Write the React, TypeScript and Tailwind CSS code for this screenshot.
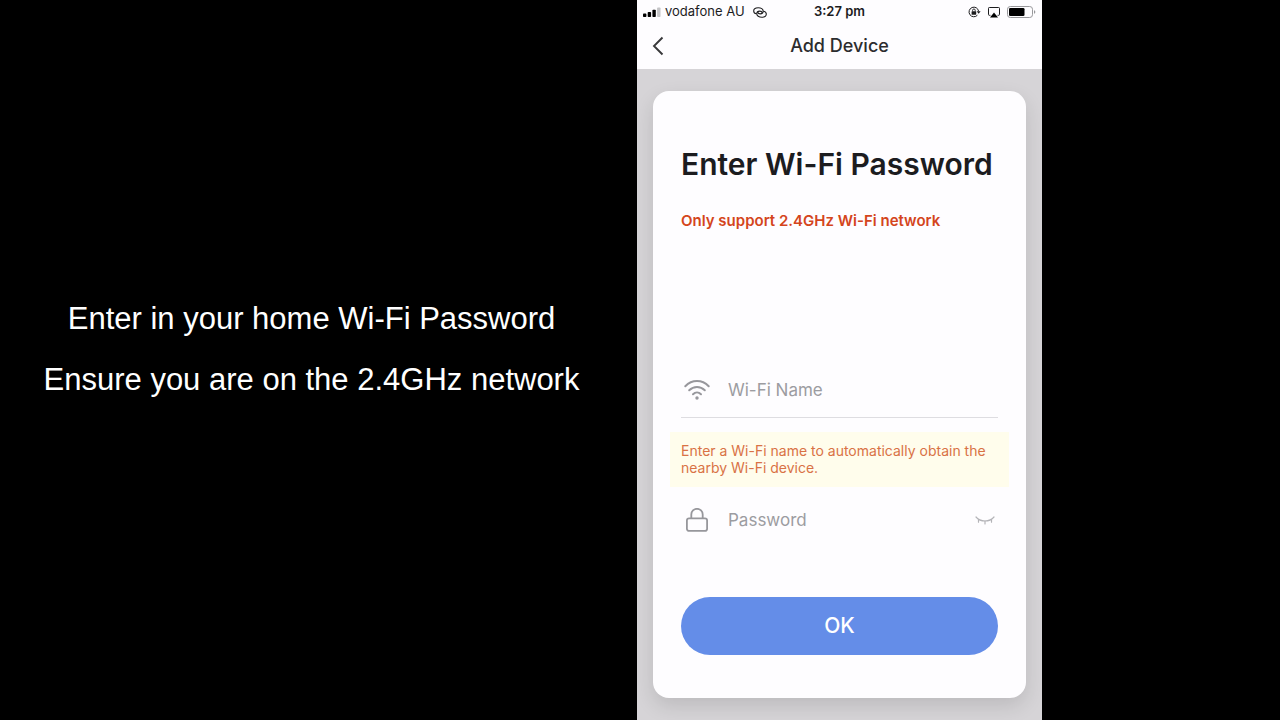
import type { ReactNode } from "react";

const CAPTIONS = [
  "Enter in your home Wi-Fi Password",
  "Ensure you are on the 2.4GHz network",
];

function SignalIcon() {
  return (
    <svg width="18" height="11" viewBox="0 0 18 11" aria-hidden="true">
      <rect x="0" y="6.6" width="3.4" height="3.4" rx="0.8" fill="#000" />
      <rect x="4.7" y="5" width="3.4" height="5" rx="0.8" fill="#000" />
      <rect x="9.4" y="2.8" width="3.4" height="7.2" rx="0.8" fill="#000" />
      <rect x="14.1" y="0.4" width="3.4" height="9.6" rx="0.8" fill="#c4c4c6" />
    </svg>
  );
}

/** Two interlocked loops, shown while a personal hotspot is shared. */
function HotspotIcon() {
  return (
    <svg
      width="14"
      height="11"
      viewBox="0 0 14 11"
      fill="none"
      stroke="#1c1c1e"
      strokeWidth="1.1"
      strokeLinecap="round"
      aria-hidden="true"
    >
      <path d="M3.300 6.800C1.700 6.400.7 5.200.7 3.900.7 2 2.700.7 5.200.7 8.100.7 10.200 2.300 10.200 4.300 10.200 5.900 8.800 6.900 7.200 6.900 6 6.900 5.100 6.300 4.900 5.400" />
      <path d="M10.700 4.200C12.300 4.600 13.300 5.800 13.300 7.100 13.300 9 11.300 10.300 8.800 10.300 5.900 10.300 3.800 8.700 3.800 6.700 3.800 5.100 5.200 4.100 6.800 4.100 8 4.100 8.900 4.700 9.100 5.600" />
    </svg>
  );
}

function RotationLockIcon() {
  return (
    <svg width="13" height="12" viewBox="0 0 13 12" fill="none" aria-hidden="true">
      <path
        d="M10.600 5.200A4.800 4.800 0 1 0 9.400 9.200"
        stroke="#1c1c1e"
        strokeWidth="1"
      />
      <path d="M8.700 5.200h3.900L10.650 7.800z" fill="#1c1c1e" />
      <rect x="3.600" y="5.300" width="4.600" height="3.400" rx="0.5" fill="#1c1c1e" />
      <path
        d="M4.600 5.300V4.300a1.300 1.300 0 0 1 2.600 0v1"
        stroke="#1c1c1e"
        strokeWidth="0.9"
      />
    </svg>
  );
}

function AirPlayIcon() {
  return (
    <svg width="12" height="11" viewBox="0 0 12 11" aria-hidden="true">
      <path
        d="M2.400 8.300H1.300a.8.800 0 0 1-.8-.8V1.300a.8.800 0 0 1 .8-.8h9.400a.8.800 0 0 1 .8.800v6.200a.8.800 0 0 1-.8.800H9.600"
        fill="none"
        stroke="#1c1c1e"
        strokeWidth="1"
      />
      <path d="M6 5.600 10 10.600H2z" fill="#000" />
    </svg>
  );
}

function BatteryIcon() {
  return (
    <svg width="29" height="12" viewBox="0 0 29 12" aria-hidden="true">
      <rect
        x="0.5"
        y="0.5"
        width="25"
        height="11"
        rx="2.800"
        fill="none"
        stroke="#98989b"
      />
      <rect x="2" y="2" width="15.500" height="8" rx="1.300" fill="#000" />
      <path d="M27 4.200c1 .3 1.300 1 1.300 1.800s-.3 1.500-1.300 1.800z" fill="#98989b" />
    </svg>
  );
}

function WifiIcon() {
  return (
    <svg
      width="26"
      height="20"
      viewBox="0 0 26 20"
      fill="none"
      stroke="#97979c"
      strokeWidth="2"
      strokeLinecap="round"
      aria-hidden="true"
    >
      <path d="M1.300 6.200C8 -0.600 18 -0.600 24.700 6.200" />
      <path d="M5.200 10.300c4.500-4.400 11.100-4.400 15.600 0" />
      <path d="M9 14.200c2.300-2.200 5.700-2.200 8 0" />
      <circle cx="13" cy="18" r="1.700" fill="#97979c" stroke="none" />
    </svg>
  );
}

function LockIcon() {
  return (
    <svg
      width="22"
      height="24"
      viewBox="0 0 22 24"
      fill="none"
      stroke="#97979c"
      strokeWidth="1.800"
      aria-hidden="true"
    >
      <rect x="0.900" y="10.300" width="20.200" height="12.600" rx="2.200" />
      <path d="M5.300 10.300V6.500a5.700 5.700 0 0 1 11.400 0v3.800" />
    </svg>
  );
}

function ClosedEyeIcon() {
  return (
    <svg
      width="20"
      height="9"
      viewBox="0 0 20 9"
      fill="none"
      stroke="#b4b4b8"
      strokeWidth="1.200"
      strokeLinecap="round"
      aria-hidden="true"
    >
      <path d="M1 1C5.500 6.300 14.500 6.300 19 1" />
      <path d="M3.500 3.300V6.200M10 5v3M16.500 3.300V6.200" />
    </svg>
  );
}

function StatusBar() {
  return (
    <div className="grid h-6 grid-cols-[1fr_auto_1fr] items-center px-1.5 text-[13px] text-[#1c1c1e]">
      <div className="flex items-center gap-1">
        <SignalIcon />
        <span className="whitespace-nowrap">vodafone AU</span>
        <span className="pl-1">
          <HotspotIcon />
        </span>
      </div>
      <span className="font-semibold">3:27 pm</span>
      <div className="flex items-center justify-end gap-[7px]">
        <RotationLockIcon />
        <AirPlayIcon />
        <BatteryIcon />
      </div>
    </div>
  );
}

function NavBar() {
  return (
    <header className="grid h-[45px] grid-cols-[1fr_auto_1fr] items-center px-[15px] pb-0.5">
      <button type="button" aria-label="Back" className="w-fit">
        <svg
          width="12"
          height="20"
          viewBox="0 0 12 20"
          fill="none"
          stroke="#38383a"
          strokeWidth="1.900"
          aria-hidden="true"
        >
          <path d="M10.500 1.500 2 10l8.500 8.500" />
        </svg>
      </button>
      <h1 className="text-[18px] font-medium text-[#2c2c2e]">Add Device</h1>
    </header>
  );
}

function Field({
  id,
  label,
  type,
  icon,
  className,
  children,
}: {
  id: string;
  label: string;
  type: "text" | "password";
  icon: ReactNode;
  className: string;
  children?: ReactNode;
}) {
  return (
    <div className={`flex items-center ${className}`}>
      <label htmlFor={id} aria-label={label} className="flex w-[47px] shrink-0">
        <span className="flex w-8 justify-center">{icon}</span>
      </label>
      <input
        id={id}
        type={type}
        placeholder={label}
        className="w-full min-w-0 flex-1 bg-transparent pt-0.5 text-[17px] outline-none placeholder:text-[#9c9ca1]"
      />
      {children}
    </div>
  );
}

function WifiForm() {
  return (
    <form
      className="flex flex-col rounded-2xl bg-[#fefdff] px-7 pt-[53px] pb-[43px] shadow-[0_8px_20px_rgba(0,0,0,0.12)]"
      onSubmit={(e) => e.preventDefault()}
    >
      <h2 className="text-[30px] leading-10 font-semibold whitespace-nowrap text-[#1c1c1f]">
        Enter Wi-Fi Password
      </h2>
      <p className="mt-[27px] text-[15px] leading-5 font-semibold text-[#d4451c]">
        Only support 2.4GHz Wi-Fi network
      </p>

      <Field
        id="ssid"
        label="Wi-Fi Name"
        type="text"
        icon={<WifiIcon />}
        className="mt-[131px] h-14 border-b border-[#dedde1]"
      />
      <p className="-mx-[11px] mt-3.5 bg-[#fffdec] px-[11px] pt-2.5 pb-[11px] text-[14px] leading-[17px] text-[#d97245]">
        Enter a Wi-Fi name to automatically obtain the nearby Wi-Fi device.
      </p>
      <Field
        id="password"
        label="Password"
        type="password"
        icon={<LockIcon />}
        className="mt-[5px] h-14"
      >
        <button type="button" aria-label="Show password" className="pr-[3px]">
          <ClosedEyeIcon />
        </button>
      </Field>

      <button
        type="submit"
        className="mt-[49px] h-[58px] rounded-full bg-[#648de8] text-[21px] font-medium text-white"
      >
        OK
      </button>
    </form>
  );
}

export default function App() {
  return (
    <div className="grid min-h-screen grid-cols-[637fr_405fr_238fr] bg-black">
      <section className="flex flex-col items-center justify-center gap-[21px] pr-3.5 pb-[22px] font-['Liberation_Sans',Arial,sans-serif] text-[31px] leading-10 text-white">
        {CAPTIONS.map((line) => (
          <p key={line}>{line}</p>
        ))}
      </section>
      <main className="min-w-0 bg-[#d6d4d7] font-['Inter',sans-serif]">
        <div className="bg-[#fefdff]">
          <StatusBar />
          <NavBar />
        </div>
        <div className="px-4 py-[22px]">
          <WifiForm />
        </div>
      </main>
    </div>
  );
}
